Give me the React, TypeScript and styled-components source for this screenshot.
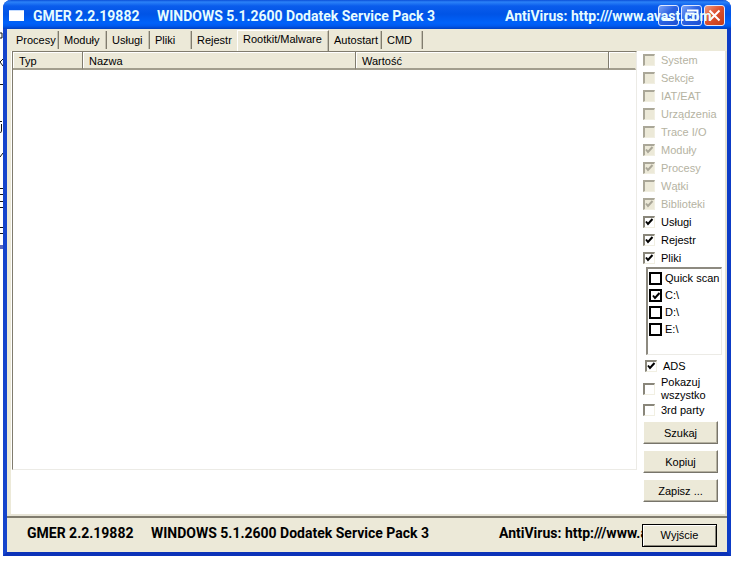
import React from "react";
import styled, { createGlobalStyle, css } from "styled-components";

const face = "#ece9d8";
const shadow = "#807c6e";
const blue = "#0a3fd0";

const GlobalStyle = createGlobalStyle`
  * { box-sizing: border-box; }
  body {
    margin: 0;
    background: #fff;
    color: #000;
    font: 11px/16px "Liberation Sans", Arial, sans-serif;
  }
  button, input { font: inherit; color: inherit; margin: 0; padding: 0; }
`;

const Desktop = styled.div`
  display: flex;
  padding: 0 5px 7px 0;
`;

const BehindStrip = styled.svg`
  flex: none;
  width: 3px;
  height: 250px;
`;

const Window = styled.main`
  flex: 1;
  min-width: 0;
  background: ${face};
  border: solid ${blue};
  border-width: 0 4px 4px;
  border-radius: 8px 8px 0 0;
  border-left-color: #1544cc;
  border-right-color: #0d3cc6;
  border-bottom-color: #0b32b8;
`;

const TitleBar = styled.header`
  position: relative;
  display: flex;
  align-items: center;
  height: 29px;
  margin: 0 -4px;
  padding: 2px 7px 0 6px;
  border-radius: 8px 8px 0 0;
  background: linear-gradient(#0a4fd8 0, #2b82f8 2px, #0a5cec 6px, #0054e6 14px, #0062fa 23px, #0059ee 26px, #0040c0 29px);
  color: #e6fcff;
`;

const AppIcon = styled.svg`
  width: 15px;
  height: 11px;
  margin-right: 9px;
`;

const Banner = styled.div`
  flex: 1;
  display: grid;
  grid-template-columns: 124px 348px auto;
  min-width: 0;
  font-family: Roboto, "Liberation Sans", sans-serif;
  font-size: 14px;
  font-weight: 700;
  line-height: 18px;
  white-space: nowrap;
`;

const TitleText = styled(Banner)`
  position: relative;
  z-index: 1;
  pointer-events: none;
`;

const Controls = styled.div`
  position: absolute;
  top: 5px;
  right: 6px;
  display: flex;
  gap: 2px;
`;

const Control = styled.button<{ $close?: boolean }>`
  width: 21px;
  height: 21px;
  border: 1px solid #dfe8ff;
  border-radius: 3px;
  background: ${(p) =>
    p.$close
      ? "linear-gradient(135deg, #f09a80, #dd5230 45%, #c43c16)"
      : "linear-gradient(135deg, #7da4f8, #2b62e2 45%, #1c50d4)"};
  svg { display: block; width: 19px; height: 19px; }
`;

const Tabs = styled.nav`
  display: flex;
  height: 22px;
  padding-left: 4px;
  align-items: flex-end;
`;

const Tab = styled.button<{ $width: number; $active?: boolean; $beforeActive?: boolean }>`
  width: ${(p) => p.$width}px;
  height: 18px;
  margin-bottom: 2px;
  padding-left: 5px;
  border: 0;
  border-right: 1px solid ${(p) => (p.$beforeActive ? face : shadow)};
  background: ${face};
  box-shadow: ${(p) => (p.$beforeActive ? "none" : "inset -1px 0 #c4c0b0")};
  text-align: left;
  white-space: nowrap;
  ${(p) =>
    p.$active &&
    css`
      height: 21px;
      margin-bottom: 0;
      padding-bottom: 4px;
      border-top: 1px solid #fff;
      border-left: 1px solid #fff;
    `}
`;

const Body = styled.div`
  display: flex;
  margin-left: 4px;
  background: #fff;
  border-right: 2px solid #e4e1d2;
`;

const ListFrame = styled.section`
  flex: 1;
  min-width: 0;
  margin: 0 0 46px 1px;
  border: 1px solid #ecebe6;
  border-top: 1px solid ${shadow};
  border-left: 1px solid ${shadow};
`;

const Table = styled.table`
  width: 100%;
  table-layout: fixed;
  border-collapse: separate;
  border-spacing: 0;
`;

const HeadCell = styled.th`
  height: 18px;
  padding: 2px 0 0 6px;
  background: ${face};
  border-right: 1px solid ${shadow};
  border-bottom: 2px solid #a29e8e;
  box-shadow: inset 1px 1px #fff;
  font-weight: 400;
  line-height: 14px;
  text-align: left;
  &:last-child { border-right-color: ${face}; }
`;

const Sidebar = styled.aside`
  flex: none;
  width: 88px;
  padding: 0 3px 14px 6px;
`;

const CheckLabel = styled.label<{ $off?: boolean; $height?: number }>`
  display: flex;
  align-items: center;
  gap: 6px;
  height: ${(p) => p.$height ?? 18}px;
  color: ${(p) => (p.$off ? "#b5b3a2" : "#000")};
  line-height: 13px;
  white-space: nowrap;
`;

const BoxWrap = styled.span`
  display: grid;
  flex: none;
  > * { grid-area: 1 / 1; }
  svg { width: 12px; height: 12px; place-self: center; pointer-events: none; visibility: hidden; }
  input:checked + svg { visibility: visible; }
`;

const Box = styled.input<{ $bold?: boolean }>`
  appearance: none;
  width: 12px;
  height: 12px;
  border: 1px solid #f1efe2;
  border-top: 2px solid #89867a;
  border-left: 2px solid #89867a;
  background: #fff;
  &:disabled { background: ${face}; border-top-color: #aaa798; border-left-color: #aaa798; }
  ${(p) =>
    p.$bold &&
    css`
      width: 13px;
      height: 13px;
      border: 2px solid #000;
    `}
`;

const Drives = styled.div`
  height: 88px;
  margin: 0 0 2px 3px;
  padding: 1px 0 0 1px;
  border: 1px solid #ecebe6;
  border-top: 2px solid #8d8a80;
  border-left: 2px solid #8d8a80;
  ${CheckLabel} { gap: 3px; }
`;

const Indented = styled.div`
  padding-left: 2px;
`;

const PushButton = styled.button<{ $default?: boolean }>`
  display: block;
  flex: none;
  width: 75px;
  height: 23px;
  border: 1px solid;
  border-color: #fff #77746a #77746a #fff;
  box-shadow: inset -1px -1px #b5b1a0;
  background: ${face};
  text-align: center;
  ${(p) =>
    p.$default &&
    css`
      border-color: #000;
      box-shadow: inset 1px 1px #fff, inset -1px -1px #8b887c;
    `}
`;

const Actions = styled.div`
  display: grid;
  gap: 6px;
  margin-top: 4px;
`;

const Footer = styled.footer`
  display: flex;
  align-items: center;
  height: 36px;
  padding: 0 10px 0 20px;
  border-top: 2px solid ${shadow};
  box-shadow: 0 -2px #e7e4d6;
`;

const FooterText = styled(Banner)`
  margin-top: -5px;
  overflow: hidden;
`;

type Check = { text: React.ReactNode; on?: boolean; off?: boolean; bold?: boolean; height?: number };

function CheckItem({ text, on, off, bold, height }: Check) {
  return (
    <CheckLabel $off={off} $height={height}>
      <BoxWrap>
        <Box type="checkbox" defaultChecked={on} disabled={off} $bold={bold} />
        <svg viewBox="0 0 12 12" fill="none" stroke={off ? "#aaa798" : "#000"} strokeWidth="2">
          <path d="M3 5.5 5 8l4.5-5" />
        </svg>
      </BoxWrap>
      <span>{text}</span>
    </CheckLabel>
  );
}

const tabs = [
  { name: "Procesy", width: 48 },
  { name: "Moduły", width: 48 },
  { name: "Usługi", width: 43 },
  { name: "Pliki", width: 42 },
  { name: "Rejestr", width: 45 },
  { name: "Rootkit/Malware", width: 92 },
  { name: "Autostart", width: 53 },
  { name: "CMD", width: 41 },
];

const scans: Check[] = [
  { text: "System", off: true },
  { text: "Sekcje", off: true },
  { text: "IAT/EAT", off: true },
  { text: "Urządzenia", off: true },
  { text: "Trace I/O", off: true },
  { text: "Moduły", off: true, on: true },
  { text: "Procesy", off: true, on: true },
  { text: "Wątki", off: true },
  { text: "Biblioteki", off: true, on: true },
  { text: "Usługi", on: true },
  { text: "Rejestr", on: true },
  { text: "Pliki", on: true },
];

const drives: Check[] = [
  { text: "Quick scan" },
  { text: "C:\\", on: true },
  { text: "D:\\" },
  { text: "E:\\" },
];

function VersionLine() {
  return (
    <>
      <span>GMER 2.2.19882</span>
      <span>WINDOWS 5.1.2600 Dodatek Service Pack 3</span>
      <span>AntiVirus: http:///www.avast.com</span>
    </>
  );
}

export default function App() {
  return (
    <>
      <GlobalStyle />
      <Desktop>
        <BehindStrip viewBox="0 0 3 250" stroke="#111" fill="none" aria-hidden="true">
          <path d="M0 33h2v5H0M0 62l3-3M0 62l3 4M0 84.500h3M0 121.500h2M1.500 124v7l-1 2M0 157l3-4M0 188.500h3M0 194.500h3M0 201.500h3M0 207.500h3M0 227.500h3M0 233.500h3" />
          <path d="M0 247h3" stroke="#5968c0" strokeWidth="4" />
        </BehindStrip>
        <Window>
          <TitleBar>
            <AppIcon viewBox="0 0 15 11" aria-hidden="true">
              <path d="M0 0h15v11H0z" fill="#fff" />
              <path d="M0 .5h15" stroke="#c5dcff" />
            </AppIcon>
            <TitleText>
              <VersionLine />
            </TitleText>
            <Controls>
              <Control aria-label="Minimize">
                <svg viewBox="0 0 19 19"><path d="M4 12h8v3H4z" fill="#fff" /></svg>
              </Control>
              <Control aria-label="Restore">
                <svg viewBox="0 0 19 19" fill="none" stroke="#fff">
                  <path d="M5 4.500h10.500V14" strokeWidth="2" />
                  <path d="M4.500 7.500h7v6.500h-7z" strokeWidth="2" />
                </svg>
              </Control>
              <Control $close aria-label="Close">
                <svg viewBox="0 0 19 19" stroke="#fff" strokeWidth="2"><path d="m4.500 4.500 10 10m0-10-10 10" /></svg>
              </Control>
            </Controls>
          </TitleBar>
          <Tabs>
            {tabs.map((t) => (
              <Tab
                key={t.name}
                $width={t.width}
                $active={t.name === "Rootkit/Malware"}
                $beforeActive={t.name === "Rejestr"}
              >
                {t.name}
              </Tab>
            ))}
          </Tabs>
          <Body>
            <ListFrame>
              <Table>
                <colgroup>
                  <col style={{ width: 70 }} />
                  <col style={{ width: 273 }} />
                  <col style={{ width: 253 }} />
                  <col />
                </colgroup>
                <thead>
                  <tr>
                    <HeadCell>Typ</HeadCell>
                    <HeadCell>Nazwa</HeadCell>
                    <HeadCell>Wartość</HeadCell>
                    <HeadCell />
                  </tr>
                </thead>
              </Table>
            </ListFrame>
            <Sidebar>
              {scans.map((s, i) => (
                <CheckItem key={i} {...s} />
              ))}
              <Drives>
                {drives.map((d, i) => (
                  <CheckItem key={i} {...d} bold height={17} />
                ))}
              </Drives>
              <Indented>
                <CheckItem text="ADS" on />
              </Indented>
              <CheckItem text={<>Pokazuj<br />wszystko</>} height={28} />
              <CheckItem text="3rd party" height={14} />
              <Actions>
                <PushButton>Szukaj</PushButton>
                <PushButton>Kopiuj</PushButton>
                <PushButton>Zapisz ...</PushButton>
              </Actions>
            </Sidebar>
          </Body>
          <Footer>
            <FooterText>
              <VersionLine />
            </FooterText>
            <PushButton $default>Wyjście</PushButton>
          </Footer>
        </Window>
      </Desktop>
    </>
  );
}
